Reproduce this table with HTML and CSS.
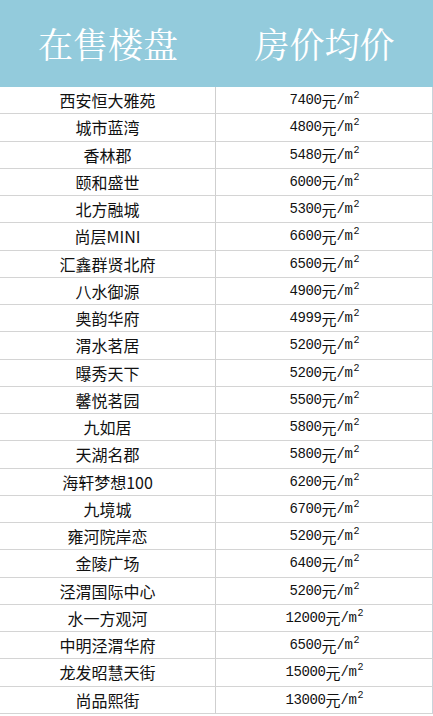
FILE: index.html
```html
<!DOCTYPE html>
<html lang="zh-CN">
<head>
<meta charset="utf-8">
<title>在售楼盘 房价均价</title>
<link rel="stylesheet" href="styles.css">
</head>
<body>
<div class="sheet">
  <div class="head">在售楼盘</div>
  <div class="head">房价均价</div>

  <div class="name">西安恒大雅苑</div><div class="price"><span class="num">7400</span>元<span class="num">/m</span><sup class="sq">2</sup></div>
  <div class="name">城市蓝湾</div><div class="price"><span class="num">4800</span>元<span class="num">/m</span><sup class="sq">2</sup></div>
  <div class="name">香林郡</div><div class="price"><span class="num">5480</span>元<span class="num">/m</span><sup class="sq">2</sup></div>
  <div class="name">颐和盛世</div><div class="price"><span class="num">6000</span>元<span class="num">/m</span><sup class="sq">2</sup></div>
  <div class="name">北方融城</div><div class="price"><span class="num">5300</span>元<span class="num">/m</span><sup class="sq">2</sup></div>
  <div class="name">尚层MINI</div><div class="price"><span class="num">6600</span>元<span class="num">/m</span><sup class="sq">2</sup></div>
  <div class="name">汇鑫群贤北府</div><div class="price"><span class="num">6500</span>元<span class="num">/m</span><sup class="sq">2</sup></div>
  <div class="name">八水御源</div><div class="price"><span class="num">4900</span>元<span class="num">/m</span><sup class="sq">2</sup></div>
  <div class="name">奥韵华府</div><div class="price"><span class="num">4999</span>元<span class="num">/m</span><sup class="sq">2</sup></div>
  <div class="name">渭水茗居</div><div class="price"><span class="num">5200</span>元<span class="num">/m</span><sup class="sq">2</sup></div>
  <div class="name">曝秀天下</div><div class="price"><span class="num">5200</span>元<span class="num">/m</span><sup class="sq">2</sup></div>
  <div class="name">馨悦茗园</div><div class="price"><span class="num">5500</span>元<span class="num">/m</span><sup class="sq">2</sup></div>
  <div class="name">九如居</div><div class="price"><span class="num">5800</span>元<span class="num">/m</span><sup class="sq">2</sup></div>
  <div class="name">天湖名郡</div><div class="price"><span class="num">5800</span>元<span class="num">/m</span><sup class="sq">2</sup></div>
  <div class="name">海轩梦想100</div><div class="price"><span class="num">6200</span>元<span class="num">/m</span><sup class="sq">2</sup></div>
  <div class="name">九境城</div><div class="price"><span class="num">6700</span>元<span class="num">/m</span><sup class="sq">2</sup></div>
  <div class="name">雍河院岸恋</div><div class="price"><span class="num">5200</span>元<span class="num">/m</span><sup class="sq">2</sup></div>
  <div class="name">金陵广场</div><div class="price"><span class="num">6400</span>元<span class="num">/m</span><sup class="sq">2</sup></div>
  <div class="name">泾渭国际中心</div><div class="price"><span class="num">5200</span>元<span class="num">/m</span><sup class="sq">2</sup></div>
  <div class="name">水一方观河</div><div class="price"><span class="num">12000</span>元<span class="num">/m</span><sup class="sq">2</sup></div>
  <div class="name">中明泾渭华府</div><div class="price"><span class="num">6500</span>元<span class="num">/m</span><sup class="sq">2</sup></div>
  <div class="name">龙发昭慧天街</div><div class="price"><span class="num">15000</span>元<span class="num">/m</span><sup class="sq">2</sup></div>
  <div class="name">尚品熙街</div><div class="price"><span class="num">13000</span>元<span class="num">/m</span><sup class="sq">2</sup></div>
</div>
</body>
</html>
```

FILE: styles.css
```css
html, body {
  margin: 0;
  padding: 0;
  background: #ffffff;
}

.sheet {
  width: 433px;
  display: grid;
  grid-template-columns: 216px 217px;
  grid-template-rows: 87px repeat(23, 27.26px);
  box-sizing: border-box;
  border-right: 1px solid #c9d3da;
}

.head {
  background: #93cbdc;
  color: #ffffff;
  font-family: "Noto Serif CJK SC", "Noto Sans CJK SC", serif;
  font-size: 35px;
  display: flex;
  align-items: center;
  justify-content: center;
  padding-bottom: 2px;
  box-sizing: border-box;
}

.name,
.price {
  display: flex;
  align-items: center;
  justify-content: center;
  border-bottom: 1px solid #d4d4d4;
  box-sizing: border-box;
  color: #111111;
  white-space: nowrap;
}

.name {
  font-family: "Noto Sans CJK SC", sans-serif;
  font-size: 16px;
  border-right: 1px solid #cfcfcf;
}

.price {
  font-family: "Noto Sans CJK SC", sans-serif;
  font-size: 15px;
}

.num {
  font-family: "Liberation Mono", monospace;
  font-size: 14px;
  letter-spacing: -0.4px;
}

.sq {
  font-family: "Liberation Mono", monospace;
  font-size: 10px;
  align-self: flex-start;
  margin-top: 4px;
  margin-left: 1px;
  line-height: 1;
}
```
